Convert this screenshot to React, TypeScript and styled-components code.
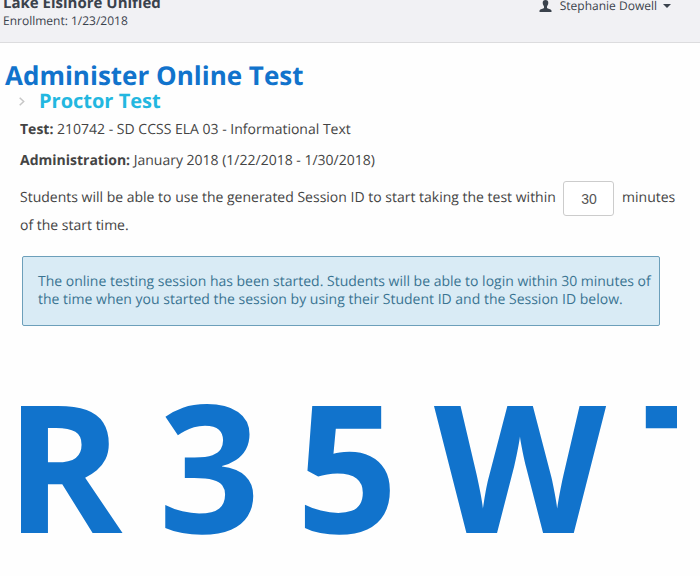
import React from "react";
import styled, { createGlobalStyle } from "styled-components";

const GlobalStyle = createGlobalStyle`
  * { box-sizing: border-box; }
  body {
    margin: 0;
    background: #fefefe;
    color: #444;
    font-family: "Open Sans", "Liberation Sans", sans-serif;
    font-size: 14px;
    text-rendering: geometricPrecision;
    overflow: hidden;
  }
`;

const Header = styled.header`
  display: flex;
  justify-content: space-between;
  align-items: flex-start;
  height: 43px;
  padding: 0 29px 0 3px;
  background: #f1f1f4;
  border-bottom: 1px solid #dcdcde;
  color: #3a424c;
`;

const Site = styled.div`
  margin-top: -6px;
`;

const SiteName = styled.div`
  font-size: 15px;
  font-weight: 700;
  line-height: 18px;
`;

const Enrollment = styled.div`
  font-size: 12px;
  line-height: 18px;
`;

const UserMenu = styled.button`
  display: flex;
  align-items: center;
  padding: 0;
  border: 0;
  background: none;
  color: inherit;
  font: inherit;
  font-size: 12px;
  line-height: 12px;
  text-rendering: inherit;
  cursor: pointer;
`;

const UserName = styled.span`
  margin: 0 6px 0 8px;
`;

const Titles = styled.div`
  padding: 17px 5px 0;
`;

const Title = styled.h1`
  margin: 0 0 1px;
  color: #1173cc;
  font-size: 26px;
  font-weight: 700;
  line-height: 30px;
`;

const Subtitle = styled.h2`
  display: flex;
  align-items: center;
  gap: 14px;
  margin: 0;
  padding-left: 14px;
  color: #23b7e0;
  font-size: 20px;
  font-weight: 700;
  line-height: 20px;
`;

const Content = styled.main`
  padding: 9px 23px 0 20px;
`;

const Detail = styled.p`
  margin: 0 0 11px;
  line-height: 20px;
`;

const Sentence = styled.p`
  margin: -1px 0 0;
  line-height: 20px;
`;

const Minutes = styled.input`
  width: 51px;
  height: 35px;
  margin: 0 4px;
  padding: 0;
  border: 1px solid #ccc;
  border-radius: 3px;
  background: #fff;
  color: #555;
  font-family: "Liberation Sans", Arial, sans-serif;
  font-size: 14px;
  text-align: center;
  vertical-align: middle;
`;

const Notice = styled.div`
  margin: 20px 17px 0 2px;
  padding: 16px 6px 16px 15px;
  border: 1px solid #6c9fba;
  border-radius: 2px;
  background: #d9ebf5;
  color: #3a7492;
  line-height: 18px;
`;

const SessionId = styled.div`
  display: flex;
  gap: 36px;
  margin: 49px 0 0 -15px;
  overflow: hidden;
  color: #1173cc;
  font-size: 178px;
  font-weight: 700;
  line-height: 180px;
`;

const id = ["R", "3", "5", "W", "T"];

export default function App() {
  return (
    <>
      <GlobalStyle />
      <Header>
        <Site>
          <SiteName>Lake Elsinore Unified</SiteName>
          <Enrollment>Enrollment: 1/23/2018</Enrollment>
        </Site>
        <UserMenu type="button" aria-haspopup="menu">
          <svg width="13" height="12" viewBox="0 0 13 12" fill="currentColor" aria-hidden="true">
            <path d="M6.500 0C8.500 0 9.400 1.200 9.300 3C9.200 4.900 8.400 5.600 8 6.500V8C8.600 8.700 12 9 12.500 10.500V12H.5V10.500C1 9 4.400 8.700 5 8V6.500C4.600 5.600 3.800 4.900 3.700 3C3.600 1.200 4.500 0 6.500 0Z" />
          </svg>
          <UserName>Stephanie Dowell</UserName>
          <svg width="8" height="4" viewBox="0 0 8 4" fill="currentColor" aria-hidden="true">
            <path d="M0 0H8L4 4Z" />
          </svg>
        </UserMenu>
      </Header>
      <Titles>
        <Title>Administer Online Test</Title>
        <Subtitle>
          <svg width="6" height="9" viewBox="0 0 6 9" fill="none" stroke="#c6c6c6" strokeWidth="1.500" aria-hidden="true">
            <path d="M.7 .7L4.700 4.500L.7 8.300" />
          </svg>
          Proctor Test
        </Subtitle>
      </Titles>
      <Content>
        <Detail><strong>Test:</strong> 210742 - SD CCSS ELA 03 - Informational Text</Detail>
        <Detail><strong>Administration:</strong> January 2018 (1/22/2018 - 1/30/2018)</Detail>
        <Sentence>
          <label htmlFor="minutes">Students will be able to use the generated Session ID to start taking the test within</label>{" "}
          <Minutes id="minutes" type="text" defaultValue="30" /> minutes of the start time.
        </Sentence>
        <Notice role="status">
          The online testing session has been started. Students will be able to login within 30 minutes of the time when you started the session by using their Student ID and the Session ID below.
        </Notice>
        <SessionId role="group" aria-label="Session ID">
          {id.map((c) => <span key={c}>{c}</span>)}
        </SessionId>
      </Content>
    </>
  );
}
